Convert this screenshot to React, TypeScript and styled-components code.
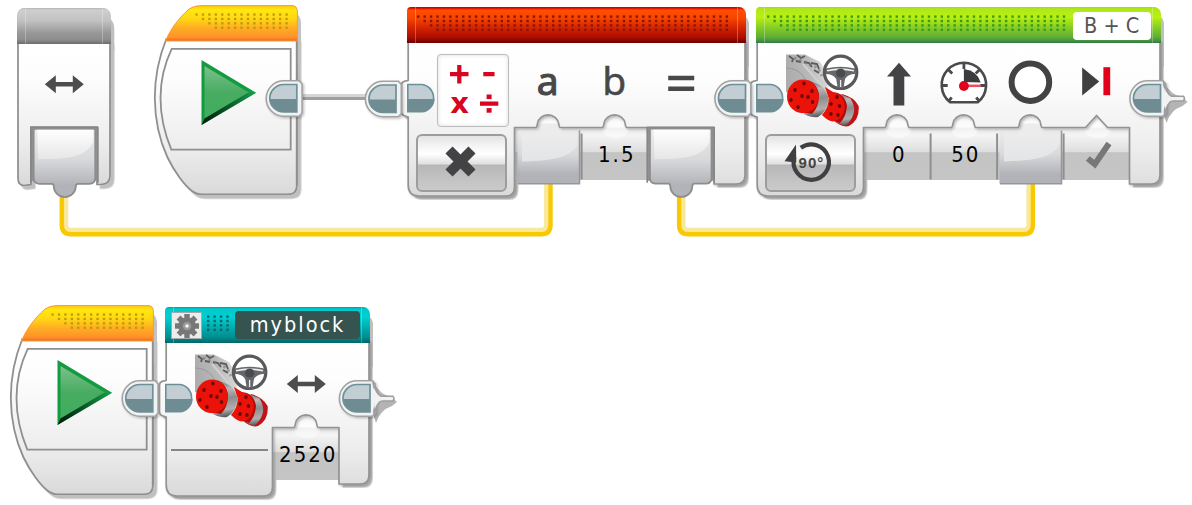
import React from "react";
import styled, { createGlobalStyle } from "styled-components";

const GlobalStyle = createGlobalStyle`
  body { margin: 0; background: #fff; overflow: hidden; }
  * { box-sizing: border-box; }
`;

const labelFont = `"DejaVu Sans Condensed", "DejaVu Sans", "Noto Sans", sans-serif`;

type Tone = "hub" | "math" | "move" | "custom";

const headerFill: Record<Tone, string> = {
  hub: "linear-gradient(#b4b4b4 0, #cfcfcf 2px, #c2c2c2 35%, #979797 70%, #8e8e8e 88%, #6c6c6c 100%)",
  math: "linear-gradient(#c80000 0, #d20800 1px, #ff4e00 3px, #f84600 30%, #d02200 60%, #a80c00 86%, #6a0000 100%)",
  move: "linear-gradient(#a0d820 0, #b0e818 2px, #b8f010 28%, #84cc26 58%, #5fae34 84%, #3f8a46 96%, #2f7440 100%)",
  custom: "linear-gradient(#009c9e 0, #00c9cc 2px, #00cfd2 28%, #00abad 58%, #008e90 84%, #006668 100%)",
};

const Canvas = styled.main`
  position: relative;
  width: 1192px;
  height: 505px;
  overflow: hidden;
  background: #fff;
`;

const Node = styled.section<{ $x: number; $y: number; $w: number; $h: number }>`
  position: absolute;
  left: ${(p) => p.$x}px;
  top: ${(p) => p.$y}px;
  width: ${(p) => p.$w}px;
  height: ${(p) => p.$h}px;
  display: flex;
  flex-direction: column;
`;

const Overlay = styled.svg`
  position: absolute;
  left: 0;
  top: 0;
  width: 100%;
  height: 100%;
  overflow: visible;
  pointer-events: none;
`;

const Header = styled.header<{ $tone: Tone }>`
  position: relative;
  flex: none;
  height: 36px;
  display: flex;
  align-items: center;
  border-radius: ${(p) => (p.$tone === "hub" ? "7px 8px 0 0" : "4px 7px 0 0")};
  background: ${(p) => headerFill[p.$tone]};
  &::before {
    content: "";
    flex: none;
    align-self: stretch;
    width: 1px;
    margin-left: 8px;
    background: rgba(255, 255, 255, 0.28);
  }
  &::after {
    content: "";
    flex: none;
    align-self: stretch;
    width: 1px;
    margin: 0 8px 0 auto;
    background: rgba(255, 255, 255, 0.28);
  }
`;

const DotGrid = styled.svg<{ $before: number }>`
  flex: none;
  height: 36px;
  margin-left: ${(p) => p.$before}px;
`;

const PortBadge = styled.div`
  margin-left: 7px;
  width: 78px;
  height: 28px;
  margin-top: 1px;
  border-radius: 4px;
  background: #fff;
  color: #555;
  text-align: center;
  font: 21.5px/28px ${labelFont};
`;

const NameBadge = styled.div`
  width: 125px;
  height: 28px;
  margin-left: 5px;
  border-radius: 4px;
  background: #35534f;
  color: #fff;
  text-align: center;
  font: 21.5px/28px ${labelFont};
  letter-spacing: 2px;
`;

const GearBox = styled.div`
  flex: none;
  width: 31px;
  height: 27px;
  margin-left: -3px;
  display: grid;
  place-items: center;
  border: 1.5px solid #a3aaaa;
  background: #ececec;
`;

const Body = styled.div<{ $inset?: number }>`
  position: relative;
  flex: 1;
  display: flex;
  padding-left: ${(p) => p.$inset ?? 0}px;
`;

const ModeColumn = styled.div`
  flex: none;
  width: 107.5px;
  padding: 11px 0 0 9px;
  display: flex;
  flex-direction: column;
`;

const IconTile = styled.div<{ $framed?: boolean }>`
  flex: none;
  width: ${(p) => (p.$framed ? 72 : 73)}px;
  height: 73px;
  margin-left: 21px;
  border: ${(p) => (p.$framed ? "1.5px solid #bdbdbd" : "0")};
  border-radius: 4px;
  background: ${(p) => (p.$framed ? "#fff" : "transparent")};
  box-shadow: ${(p) => (p.$framed ? "inset 0 0 4px #ddd, 0 0 2px #eee" : "none")};
  svg { display: block; }
`;

const ModeButton = styled.div`
  flex: none;
  width: 91px;
  height: 58px;
  margin-top: 7px;
  border: 2px solid #9d9d9d;
  border-radius: 6px;
  background: linear-gradient(#e3e3e3 0, #f1f1f1 8px, #fff 18px, #e0e0e0 28px, #b7b7b7 29px, #c5c5c5 46px, #cacaca 100%);
  display: grid;
  place-items: center;
`;

const Param = styled.div`
  flex: none;
  width: 66.5px;
  display: flex;
  flex-direction: column;
  align-items: center;
`;

const Glyph = styled.div`
  height: 80px;
  width: 66px;
  flex: none;
  svg { display: block; overflow: visible; }
`;

const Letter = styled.div<{ $heavy?: boolean }>`
  height: 80px;
  flex: none;
  color: #48484a;
  font: 39px/74px "Noto Sans", "Open Sans", sans-serif;
  -webkit-text-stroke: ${(p) => (p.$heavy ? 1.1 : 0.5)}px #48484a;
`;

const Value = styled.div`
  height: 52px;
  margin-top: 6px;
  color: #000;
  font: 22px/52px ${labelFont};
  letter-spacing: 2px;
  padding-left: 5px;
  white-space: nowrap;
`;

const Underline = styled.div`
  width: 97px;
  height: 2px;
  margin: 22px 0 0 -3px;
  background: #858585;
`;

const Angle = styled.text`
  font: bold 15px "Liberation Sans", sans-serif;
  letter-spacing: 1px;
  fill: #444;
`;

const Times = styled.text`
  font: bold 29px "DejaVu Sans", sans-serif;
  fill: #d9041e;
`;

const Gradients = () => (
  <defs>
    <linearGradient id="body" x1="0" y1="0" x2="0" y2="1">
      <stop offset="0" stopColor="#fff" />
      <stop offset="0.25" stopColor="#fdfdfd" />
      <stop offset="0.7" stopColor="#ededed" />
      <stop offset="1" stopColor="#d9d9d9" />
    </linearGradient>
    <linearGradient id="sun" x1="0" y1="0" x2="0" y2="1">
      <stop offset="0" stopColor="#ffc812" />
      <stop offset="0.12" stopColor="#ffe80e" />
      <stop offset="0.35" stopColor="#ffd914" />
      <stop offset="0.65" stopColor="#ffab24" />
      <stop offset="0.9" stopColor="#ff902a" />
      <stop offset="1" stopColor="#e86a20" />
    </linearGradient>
    <linearGradient id="cell" x1="0" y1="0" x2="0" y2="1">
      <stop offset="0" stopColor="#e6e6e6" />
      <stop offset="0.15" stopColor="#f4f4f4" />
      <stop offset="0.46" stopColor="#dedede" />
      <stop offset="0.48" stopColor="#c4c4c4" />
      <stop offset="1" stopColor="#c5c5c5" />
    </linearGradient>
    <linearGradient id="bump" x1="0" y1="0" x2="0" y2="1">
      <stop offset="0" stopColor="#e2e2e2" />
      <stop offset="0.5" stopColor="#f6f6f6" />
      <stop offset="1" stopColor="#fbfbfb" />
    </linearGradient>
    <linearGradient id="plug" x1="0" y1="0" x2="0" y2="1">
      <stop offset="0" stopColor="#ececec" />
      <stop offset="0.45" stopColor="#d8d9db" />
      <stop offset="0.82" stopColor="#b1b3b8" />
      <stop offset="1" stopColor="#b1b3b8" />
    </linearGradient>
    <linearGradient id="gloss" x1="0" y1="0" x2="0" y2="1">
      <stop offset="0" stopColor="#fff" stopOpacity="0.95" />
      <stop offset="1" stopColor="#e8e8e9" stopOpacity="0.9" />
    </linearGradient>
    <linearGradient id="softgloss" x1="0" y1="0" x2="0" y2="1">
      <stop offset="0" stopColor="#ececec" />
      <stop offset="1" stopColor="#e3e4e6" />
    </linearGradient>
    <linearGradient id="band" x1="0.4" y1="0" x2="0.5" y2="1">
      <stop offset="0" stopColor="#6a6a6a" />
      <stop offset="0.25" stopColor="#b9b9b9" />
      <stop offset="0.5" stopColor="#8c8c8c" />
      <stop offset="0.8" stopColor="#b0b0b0" />
      <stop offset="1" stopColor="#555" />
    </linearGradient>
    <linearGradient id="hull" x1="0" y1="0.2" x2="1" y2="0">
      <stop offset="0" stopColor="#adadad" />
      <stop offset="0.5" stopColor="#b9b9b9" />
      <stop offset="1" stopColor="#e6e6e6" />
    </linearGradient>
    <linearGradient id="green" x1="0" y1="0" x2="0" y2="1">
      <stop offset="0" stopColor="#7cc08a" />
      <stop offset="0.5" stopColor="#48ac62" />
      <stop offset="1" stopColor="#3fae5c" />
    </linearGradient>
    <linearGradient id="edge" x1="0" y1="0" x2="1" y2="0">
      <stop offset="0" stopColor="#021a0c" />
      <stop offset="0.4" stopColor="#0a4a24" />
      <stop offset="1" stopColor="#16a34a" />
    </linearGradient>
    <filter id="drop" x="-10%" y="-10%" width="125%" height="125%">
      <feDropShadow dx="3.6" dy="3.6" stdDeviation="0.7" floodColor="#000" floodOpacity="0.25" />
    </filter>
    <filter id="inner" x="-10%" y="-10%" width="125%" height="125%">
      <feDropShadow dx="1.3" dy="1.3" stdDeviation="1.3" floodColor="#000" floodOpacity="0.25" />
    </filter>
  </defs>
);

const PITCH = 6.43;

const Dots = ({ columns, color, before, stepped = true, top = 9.5 }: { columns: number; color: string; before: number; stepped?: boolean; top?: number }) => (
  <DotGrid $before={before} width={Math.ceil((columns - 1) * PITCH + 3)}>
    {[0, 1, 2, 3].flatMap((row) =>
      Array.from({ length: columns }, (_, c) =>
        stepped && c < row ? null : (
          <rect key={`${row}-${c}`} x={c * PITCH} y={top + row * 4.4 - 1.1} width="2.4" height="2.4" fill={color} />
        )
      )
    )}
  </DotGrid>
);

/* Outgoing sequence connector, 37 x 37 with its flat side on the right. */
const OutPort = ({ x, y }: { x: number; y: number }) => (
  <g transform={`translate(${x} ${y})`}>
    <path d="M18 0.8H33.5L36.3 4V33L33.5 36.2H18A17.6 17.7 0 0 1 18 0.8Z" fill="#f2f2f2" stroke="#a2a2a2" strokeWidth="1.6" filter="url(#inner)" />
    <path d="M18 4.5H31V32H18A14 13.7 0 0 1 18 4.5Z" fill="#c3ced4" />
    <path d="M4 19H31V32H18A14 13.7 0 0 1 4 19Z" fill="#6f8c93" />
    <path d="M18 4.5H31V32H18A14 13.7 0 0 1 18 4.5Z" fill="none" stroke="#6c9097" strokeWidth="1.7" />
  </g>
);

/* Last connector of a sequence, with its short open stub. */
const EndPort = ({ x, y }: { x: number; y: number }) => (
  <g>
    <path d={`M${x + 35} ${y + 3}Q${x + 41} ${y + 15} ${x + 53} ${y + 17}L${x + 58} ${y + 22}L${x + 53} ${y + 26}Q${x + 41} ${y + 30} ${x + 37} ${y + 43}L${x + 34} ${y + 34}Z`} fill="#b4b4b4" />
    <OutPort x={x} y={y} />
    <path d={`M${x + 34} ${y + 2}Q${x + 37} ${y + 14} ${x + 42} ${y + 16.2}H${x + 54}Q${x + 56} ${y + 18.5} ${x + 54} ${y + 21}H${x + 42}Q${x + 38} ${y + 23} ${x + 35} ${y + 34}Z`} fill="#f2f2f2" stroke="#9d9d9d" strokeWidth="1.5" />
    <path d={`M${x + 33} ${y + 3}V${y + 33.5}L${x + 37} ${y + 20.5}H${x + 43}V${y + 17}H${x + 37}Z`} fill="#f2f2f2" />
  </g>
);

const InPort = () => (
  <g>
    <path d="M0.8 77.5H15A12.7 13.7 0 0 1 15 104.8H0.8Z" fill="#c3ced4" />
    <path d="M0.8 92H27.6A12.7 13 0 0 1 15 104.8H0.8Z" fill="#6f8c93" />
    <path d="M0.8 77.5H15A12.7 13.7 0 0 1 15 104.8H0.8Z" fill="none" stroke="#6c9097" strokeWidth="1.6" />
  </g>
);

/* Output slot: a tile with a round nub at the bottom. */
const OutSlot = ({ x, y, nub = 33.8 }: { x: number; y: number; nub?: number }) => (
  <g transform={`translate(${x} ${y})`}>
    <path d="M0 0H66.5V54H0Z" fill="#8f908f" />
    <path d="M-0.3 56V0.8H66.7V56" fill="none" stroke="#858685" strokeWidth="1.6" />
    <path d={`M2.5 2H64V51Q64 57 58 57H${nub + 13}Q${nub + 11.3} 57 ${nub + 11} 59.5A11 10.8 0 0 1 ${nub - 11} 59.5Q${nub - 11.3} 57 ${nub - 13} 57H8Q2.5 57 2.5 51Z`} fill="url(#plug)" stroke="#8c8d8c" strokeWidth="1.7" />
    <path d="M6 3H62V15Q58 26 42 30Q30 32.5 7 32.5Z" fill="url(#gloss)" />
  </g>
);

/* Wire plugged into an input slot. */
const InSlot = ({ x, y }: { x: number; y: number }) => (
  <g transform={`translate(${x + 1} ${y})`}>
    <path d="M2 3H64V56.3H2Z" fill="url(#plug)" />
    <path d="M64 3V56.3H2.5" fill="none" stroke="#96979a" strokeWidth="1.5" />
    <path d="M6.5 7H62V17Q56 29 34 32Q24 33.5 6.5 34Z" fill="url(#softgloss)" />
  </g>
);

type Slot = "value" | "wired" | "out" | "logic";

const COLUMN = 66.5;

/* Jigsaw silhouette of a programming block with one notch per parameter. */
const Shell = ({ width, slots }: { width: number; slots: Slot[] }) => {
  const start = 107.5;
  const top = 120.5;
  const end = start + COLUMN * slots.length;
  const right = width - 1;
  const notches = slots
    .map((slot, i) => {
      const cx = start + COLUMN * i + COLUMN / 2 + 0.3;
      if (slot === "out") return "";
      if (slot === "logic") return `L${cx - 11} ${top}L${cx} ${top - 12}L${cx + 11} ${top}`;
      return `L${cx - 12} ${top}Q${cx - 10.8} ${top - 1} ${cx - 10.6} ${top - 4}A10.7 10 0 0 1 ${cx + 10.6} ${top - 4}Q${cx + 10.8} ${top - 1} ${cx + 12} ${top}`;
    })
    .join("");
  const outline = `M1.2 34V73.5L-2 74.2Q-5.5 75 -5.5 78V105Q-5.5 108 -2 109L1.2 110V178Q1.2 189 12 189H99Q107.5 189 107.5 180V${top}${notches}L${end} ${top}V177H${right - 9}Q${right} 177 ${right} 168V34Z`;
  return (
    <Overlay>
      <path d={outline} fill="#ddd" filter="url(#drop)" />
      <path d={`M${right - 9} 5Q${right + 4} 8 ${right + 4} 18V60H${right - 9}Z`} fill="#bfbfbf" />
      {slots.map((slot, i) => {
        const x = start + COLUMN * i;
        const cx = x + COLUMN / 2 + 0.3;
        return (
          <g key={i}>
            {slot !== "out" && <rect x={cx - 12} y={top - 15} width="24" height="17" fill="url(#bump)" />}
            {slot !== "out" && <rect x={x} y={top} width={COLUMN + 0.3} height="52.5" fill="url(#cell)" />}
            {slot !== "out" && <ellipse cx={cx + 1} cy={top + 2} rx="13" ry="9" fill="#fff" opacity="0.45" />}
            {slot === "wired" && <InSlot x={x} y={top} />}
            {slot === "wired" && <path d={`M${cx - 10} ${top - 4}H${cx + 10}L${cx + 13} ${top + 9}H${cx - 13}Z`} fill="#ececec" />}
          </g>
        );
      })}
      <path d={outline} fill="url(#body)" stroke="#939393" strokeWidth="1.7" strokeLinejoin="round" filter="url(#inner)" />
      {slots.map((slot, i) => {
        const x = start + COLUMN * i;
        return (
          <g key={i}>
            {slot === "out" && <OutSlot x={x} y={top - 0.8} />}
            {i > 0 && slot !== "out" && <rect x={x - 0.4} y={top + 6} width="2" height="46" fill="#8f8f8f" />}
          </g>
        );
      })}
      <InPort />
    </Overlay>
  );
};

const BothWays = ({ cy }: { cy: number }) => (
  <svg width="66" height="80">
    <path d={`M13.8 ${cy}l11-9v6.8h17v-6.8l11 9l-11 9v-6.8h-17v6.8z`} fill="#4d4d4f" />
  </svg>
);

const MotorIcon = () => (
  <svg width="73" height="73" viewBox="0 0 73 73">
    <path d="M0 0.5H19L34 8L40 18L42 36L18 42L0 38Z" fill="url(#hull)" />
    <path d="M0 14Q11 14 17 22L26 34" fill="none" stroke="#999" strokeWidth="1" />
    <path d="M17 10L36 32" fill="none" stroke="#d0d0d0" strokeWidth="2" />
    <path d="M3 2l4 3l-1 3M11 1l4 3l4-2M10 7l5 1M18 8l5 1l3 4M25 9l6 1l2 5M28 16l5 3" fill="none" stroke="#5a5a5a" strokeWidth="1.8" />
    <path d="M8 4L32 14L36 22" fill="none" stroke="#777" strokeWidth="3" strokeDasharray="2.5 3" opacity="0.6" />
    <path d="M22 26L34 31Q42 37 42.4 46Q41 58 32 63Q26 64 18 60Z" fill="url(#band)" />
    <path d="M18 26Q31 27 33 41Q33 53 26 60L15 58Z" fill="#b90a0a" />
    <ellipse cx="16.8" cy="42.4" rx="15.8" ry="16.8" fill="#ea1209" />
    <path d="M56 40Q68 43 72.6 52Q74 66 63 72Q56 74 47 66Z" fill="#c21216" />
    <path d="M50 38.5L64 44Q69 51 68 58Q66 67 59 72L46 66Z" fill="url(#band)" />
    <path d="M46 38Q59 39 61 52Q60 63 54 69L42 65Z" fill="#b30a0a" />
    <path d="M39 33L47 38Q59 41 58.8 54Q57 66 47 67.5Q42 67 36 61Q43 53 42.6 44Z" fill="#ea1209" />
    <g fill="#6b0a06">
      {[[18, 29.5], [9, 36], [26, 37], [5, 46], [26.5, 48], [12, 53], [16, 42], [22, 43], [51, 43], [45, 50], [53.5, 52], [45, 60], [52, 61]].map(([x, y]) => (
        <ellipse key={`${x}-${y}`} cx={x} cy={y} rx="1.7" ry="1.9" />
      ))}
    </g>
    <circle cx="54.6" cy="18.3" r="16.2" fill="#fff" fillOpacity="0.88" stroke="#58595b" strokeWidth="3.2" />
    <path d="M40 14.5Q54 11 69 14.5L69 20Q62 20 59 25L57.5 34H51.7L50.2 25Q47 20 40 20Z" fill="#66676a" />
    <path d="M41 16.7Q54 13.6 68 16.7" fill="none" stroke="#eee" strokeWidth="1.6" />
    <circle cx="54.6" cy="19" r="4.6" fill="#4a4b4e" />
    <path d="M54.6 26V33" stroke="#eee" strokeWidth="1.3" />
  </svg>
);

const MathIcon = () => (
  <svg width="69" height="70" viewBox="438 55.5 69 70">
    <path d="M450 74.7H468.5M459.3 65.6V84M483.3 74.7H494.5M480 104.2H498.3" stroke="#d9041e" strokeWidth="4.2" />
    <rect x="486.6" y="95" width="5" height="4.6" fill="#d9041e" />
    <rect x="486.6" y="108.6" width="5" height="4.6" fill="#d9041e" />
    <Times x="450.3" y="113.2">x</Times>
  </svg>
);

const Gear = () => (
  <svg width="26" height="26" viewBox="-13 -13 26 26">
    {Array.from({ length: 8 }, (_, i) => (
      <rect key={i} x="-2.7" y="-12" width="5.4" height="6" fill="#777" transform={`rotate(${i * 45})`} />
    ))}
    <circle r="8.8" fill="#777" />
    <circle r="4.3" fill="#999" />
    <circle r="1.8" fill="#f4f4f4" />
  </svg>
);

const RotationIcon = () => (
  <svg width="87" height="54" viewBox="767 136 87 54">
    <path d="M800.8 147.8A17.7 17.7 0 1 1 794.3 157" fill="none" stroke="#404042" strokeWidth="4.2" />
    <path d="M784.5 161.2L796 144.5L796.3 162.5Z" fill="#404042" />
    <Angle x="798.6" y="167.6">90°</Angle>
  </svg>
);

const StartShape = () => (
  <Overlay>
    <path
      d="M12.3 34C5 52 0.8 72 0.8 93C1 115 5 134 13.3 152C20 166 30 180 38 186Q42 189.3 48 189.3H134Q142.8 189.3 142.8 181V34Z"
      fill="url(#body)" stroke="#8f8f8f" strokeWidth="1.8" filter="url(#drop)"
    />
    <path d="M139 6Q147 10 147 18V60H143.4V34Z" fill="#c2c2c2" />
    <path d="M142.8 34V180" stroke="#8f8f8f" strokeWidth="1.8" />
    <path d="M11.5 36C17 23 25 13 35 4Q40 0.6 47 0.6H138Q143.4 0.6 143.4 7V36Z" fill="url(#sun)" stroke="#fb9a30" strokeWidth="1" />
    <path d="M17.7 43.9H136.7V144.7H17.3C10 127 6.5 110 6.5 93C6.5 76 10 60 17.7 43.9Z" fill="none" stroke="#8f8f8f" strokeWidth="1.8" />
    {[0, 1, 2, 3].flatMap((row) =>
      Array.from({ length: 15 }, (_, c) =>
        c < row ? null : <rect key={`${row}-${c}`} x={41.4 + c * PITCH} y={8.4 + row * 4.4} width="2.3" height="2.3" fill="#bd9a08" />
      )
    )}
    <path d="M47.5 55L102 87.8L47.5 120Z" fill="#139b42" />
    <path d="M50.5 61L95.5 88L50.5 114Z" fill="url(#green)" />
    <path d="M50.5 113.5L93.5 88L102 87.8L47.5 120Z" fill="url(#edge)" />
  </Overlay>
);

const StartBlock = ({ x, y }: { x: number; y: number }) => (
  <Node $x={x} $y={y} $w={147} $h={195}>
    <StartShape />
    <Overlay><OutPort x={111.8} y={75} /></Overlay>
  </Node>
);

export default function App() {
  return (
    <>
      <GlobalStyle />
      <Canvas>
        <Overlay>
          <Gradients />
          <path d="M299 95.5H366" stroke="#d5d5d5" strokeWidth="3" />
          <path d="M299 98.5H366" stroke="#9f9f9f" strokeWidth="3" />
          {[[61.8, 550.5], [679.1, 1032.8]].map(([a, b]) => (
            <g key={a} fill="none">
              <path d={`M${a + 4.2} 194V225.5Q${a + 4.2} 230 ${a + 8.8} 230H${b - 9}Q${b - 4.2} 230 ${b - 4.2} 225.5V183`} stroke="#f9e79a" strokeWidth="4.4" />
              <path d={`M${a} 194V225Q${a} 234.3 ${a + 9.5} 234.3H${b - 9.5}Q${b} 234.3 ${b} 225V183`} stroke="#f8c800" strokeWidth="4.4" />
            </g>
          ))}
        </Overlay>

        <Node $x={17} $y={8} $w={94} $h={190}>
          <Overlay>
            <path d="M1 34V170Q1 177.5 7 177.5L14 176.5V119H80V176.5H84Q93 176 93 168V34Z" fill="url(#body)" stroke="#8c8c8c" strokeWidth="1.7" filter="url(#drop)" />
            <path d="M88 7Q97.3 12 97.3 20V42H94V30Z" fill="#bfbfbf" />
            <OutSlot x={14.2} y={118.8} nub={33.6} />
          </Overlay>
          <Header $tone="hub" />
          <Body $inset={13.7}><Glyph><BothWays cy={40.2} /></Glyph></Body>
        </Node>

        <StartBlock x={153.7} y={5} />

        <Node $x={407} $y={7} $w={339} $h={200}>
          <Shell width={339} slots={["wired", "value", "out"]} />
          <Header $tone="math"><Dots columns={49} color="#8c1600" before={1.3} /></Header>
          <Body>
            <ModeColumn>
              <IconTile $framed><MathIcon /></IconTile>
              <ModeButton>
                <svg width="34" height="34" viewBox="1.5 1.5 34 34"><path d="M5.5 5.5L28.5 28.5M28.5 5.5L5.5 28.5" stroke="#434345" strokeWidth="10" /></svg>
              </ModeButton>
            </ModeColumn>
            <Param><Letter $heavy>a</Letter></Param>
            <Param><Letter>b</Letter><Value>1.5</Value></Param>
            <Param><Glyph><svg width="66" height="80"><path d="M20.2 35H46.2M20.2 45.8H46.2" stroke="#48484a" strokeWidth="4.4" /></svg></Glyph></Param>
          </Body>
        </Node>

        <Node $x={756} $y={7} $w={405} $h={200}>
          <Shell width={405} slots={["value", "value", "wired", "logic"]} />
          <Header $tone="move">
            <Dots columns={47} color="#3f9a1a" before={1.7} />
            <PortBadge>B + C</PortBadge>
          </Header>
          <Body>
            <ModeColumn>
              <IconTile><MotorIcon /></IconTile>
              <ModeButton><RotationIcon /></ModeButton>
            </ModeColumn>
            <Param>
              <Glyph><svg width="66" height="80"><path d="M35 19.7L47 33.5H40.3V62.5H29.5V33.5H23Z" fill="#434345" /></svg></Glyph>
              <Value>0</Value>
            </Param>
            <Param>
              <Glyph>
                <svg width="66" height="80" viewBox="-0.7 0 66 80">
                  <path d="M19.4 59.3A22.2 22.2 0 1 1 47 59.3Z" fill="#fff" stroke="#4a4a4c" strokeWidth="2.6" />
                  <path d="M33.2 26V39L50 39.5Q47 28 33.2 26Z" fill="#3c3c3e" />
                  <path d="M33.2 20V26M12 42.5H17M49.5 42.5H54.5M18 27L21.5 30.5M48.5 27L45 30.5M18 58L21 54.5M48.5 58L45.5 54.5" stroke="#4a4a4c" strokeWidth="2.8" />
                  <path d="M33.2 42.8H50" stroke="#e9515c" strokeWidth="2.5" />
                  <circle cx="33.2" cy="43" r="4.9" fill="#e2001a" />
                </svg>
              </Glyph>
              <Value>50</Value>
            </Param>
            <Param><Glyph><svg width="66" height="80"><circle cx="33.4" cy="39.2" r="18.8" fill="#fff" stroke="#434345" strokeWidth="6" /></svg></Glyph></Param>
            <Param>
              <Glyph>
                <svg width="66" height="130">
                  <path d="M19.2 24.5L36.2 38.5L19.2 52.5Z" fill="#3f3f41" />
                  <rect x="40.4" y="24.2" width="6.8" height="28" fill="#e2001a" />
                  <path d="M24.8 115.5L31.8 121.2L46 100.5" fill="none" stroke="#777779" strokeWidth="6" />
                </svg>
              </Glyph>
            </Param>
          </Body>
        </Node>

        <StartBlock x={10.2} y={305} />

        <Node $x={165} $y={307} $w={205} $h={200}>
          <Shell width={205} slots={["value"]} />
          <Header $tone="custom">
            <GearBox><Gear /></GearBox>
            <Dots columns={4} color="#05686b" before={5} stepped={false} />
            <NameBadge>myblock</NameBadge>
          </Header>
          <Body>
            <ModeColumn>
              <IconTile><MotorIcon /></IconTile>
              <Underline />
            </ModeColumn>
            <Param>
              <Glyph><BothWays cy={41} /></Glyph>
              <Value>2520</Value>
            </Param>
          </Body>
        </Node>

        <Overlay>
          <OutPort x={365} y={80.5} />
          <OutPort x={714.5} y={80} />
          <EndPort x={1129.5} y={80} />
          <EndPort x={339} y={380} />
        </Overlay>
      </Canvas>
    </>
  );
}
